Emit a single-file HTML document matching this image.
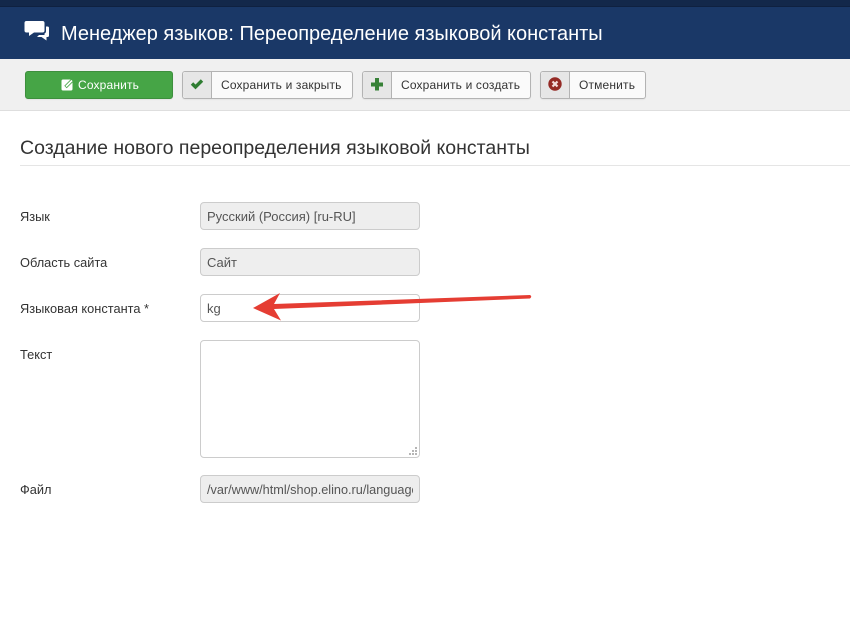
<!DOCTYPE html>
<html lang="ru">
<head>
<meta charset="utf-8">
<title>Менеджер языков</title>
<style>
html,body{margin:0;padding:0;background:#fff}
body{width:850px;height:627px;position:relative;overflow:hidden;font-family:"Liberation Sans",sans-serif;font-size:13px;color:#333}
.a{position:absolute;white-space:nowrap}
.btn{position:absolute;top:71px;height:26px;border:1px solid #b3b3b3;border-radius:3px;background:#fafafa;box-shadow:0 1px 1px rgba(0,0,0,.05);line-height:26px;box-sizing:content-box}
.ic{position:absolute;left:0;top:0;width:28px;height:26px;background:#e6e6e6;border-right:1px solid #b3b3b3;border-radius:3px 0 0 3px}
.ic svg{position:absolute;left:0;top:0}
.t{position:absolute;top:0;white-space:nowrap;color:#333;font-size:12px;letter-spacing:.16px}
.lab{position:absolute;left:20px;white-space:nowrap;font-size:12.8px;color:#333;line-height:18px}
.inp{position:absolute;left:200px;width:218px;height:26px;border:1px solid #ccc;border-radius:4px;background:#fff;line-height:28px;font-size:13px;color:#555;overflow:hidden;white-space:nowrap;box-sizing:content-box}
.inp span{position:absolute;left:6px;top:0}
.dis{background:#eee}
</style>
</head>
<body>
<div class="a" style="left:0;top:0;width:850px;height:7px;background:#13284a"></div>
<div class="a" style="left:0;top:6px;width:850px;height:1px;background:#0f2140"></div>
<div class="a" style="left:0;top:7px;width:850px;height:52px;background:#1a3867"></div>
<svg class="a" style="left:24px;top:20px" width="26" height="23" viewBox="0 0 26 23">
<path fill="#fff" d="M2.500 1H18.500Q20.500 1 20.500 3V10.500Q20.500 12.500 18.500 12.500H10L5 16V12.500H2.500Q0.500 12.500 0.500 10.500V3Q0.500 1 2.500 1Z"/>
<path fill="#fff" d="M22 6.500H23.500Q25 6.500 25 8V15.500Q25 17 23.500 17H22.500V20.500L17.500 17H13L15 15H20.500V13.500Q22 13 22 11Z"/>
</svg>
<div class="a" style="left:61px;top:21px;font-size:20px;letter-spacing:-.02px;line-height:26px;color:#fff">Менеджер языков: Переопределение языковой константы</div>

<div class="a" style="left:0;top:59px;width:850px;height:51px;background:#f0f0f0"></div>
<div class="a" style="left:0;top:110px;width:850px;height:1px;background:#dedede"></div>

<div class="btn" style="left:25px;width:146px;background:#46a546;border-color:#3d8f3d">
<svg class="a" style="left:35px;top:6px" width="13" height="14" viewBox="0 0 13 14">
<rect x="0.500" y="1.500" width="11" height="11" rx="1.500" fill="#fff"/>
<path stroke="#46a546" stroke-width="3.400" d="M4.500 9L11.500 2"/>
<path stroke="#fff" stroke-width="1.800" d="M5 8.500L11 2.500"/>
</svg>
<span class="t" style="left:52px;color:#fff">Сохранить</span>
</div>

<div class="btn" style="left:182px;width:169px">
<div class="ic"><svg width="28" height="26" viewBox="0 0 28 26"><path fill="none" stroke="#2f7d32" stroke-width="3.400" d="M9 11.500L12.500 15L19 8.500"/></svg></div>
<span class="t" style="left:38px">Сохранить и закрыть</span>
</div>

<div class="btn" style="left:362px;width:167px">
<div class="ic"><svg width="28" height="26" viewBox="0 0 28 26"><path fill="#378137" d="M12 6H16V10.500H20V14.500H16V18.500H12V14.500H8V10.500H12Z"/></svg></div>
<span class="t" style="left:38px">Сохранить и создать</span>
</div>

<div class="btn" style="left:540px;width:104px">
<div class="ic"><svg width="28" height="26" viewBox="0 0 28 26"><circle cx="14" cy="12" r="6.700" fill="#942a25"/><path stroke="#f3dcdc" stroke-width="2.200" d="M11.500 9.500L16.500 14.500M16.500 9.500L11.500 14.500"/></svg></div>
<span class="t" style="left:38px">Отменить</span>
</div>

<div class="a" style="left:20px;top:135px;font-size:19.500px;line-height:26px;color:#333">Создание нового переопределения языковой константы</div>
<div class="a" style="left:20px;top:165px;width:830px;height:1px;background:#e5e5e5"></div>

<div class="lab" style="top:208px">Язык</div>
<div class="inp dis" style="top:202px"><span>Русский (Россия) [ru-RU]</span></div>

<div class="lab" style="top:254px">Область сайта</div>
<div class="inp dis" style="top:248px"><span>Сайт</span></div>

<div class="lab" style="top:300px">Языковая константа *</div>
<div class="inp" style="top:294px"><span>kg</span></div>

<div class="lab" style="top:346px">Текст</div>
<div class="inp" style="top:340px;height:116px"></div>
<svg class="a" style="left:405px;top:444px" width="14" height="12" viewBox="0 0 14 12"><g fill="#b5b5b5"><rect x="10" y="3" width="2" height="2"/><rect x="7" y="6" width="2" height="2"/><rect x="10" y="6" width="2" height="2"/><rect x="4" y="9" width="2" height="2"/><rect x="7" y="9" width="2" height="2"/><rect x="10" y="9" width="2" height="2"/></g></svg>

<div class="lab" style="top:481px">Файл</div>
<div class="inp dis" style="top:475px;font-size:12.700px"><span style="width:206px;height:26px;overflow:hidden">/var/www/html/shop.elino.ru/language/overrides/ru-RU.override.ini</span></div>

<svg class="a" style="left:0;top:0" width="850" height="627" viewBox="0 0 850 627">
<path fill="#e53d33" d="M253 308L280 293L274 304L530 295Q532.500 296.500 530 298.500L274 309L281 320.500Z"/>
</svg>
</body>
</html>
